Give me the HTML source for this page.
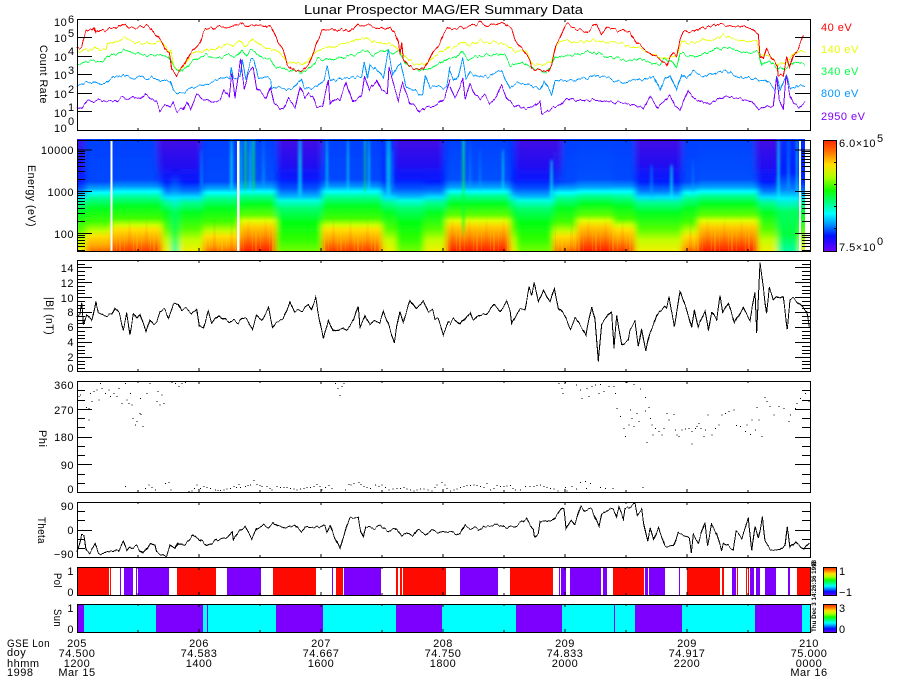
<!DOCTYPE html>
<html lang="en">
<head>
<meta charset="utf-8">
<title>Lunar Prospector MAG/ER Summary Data</title>
<style>
html,body{margin:0;padding:0;background:#fff}
svg{display:block}
text{font-family:"Liberation Sans",sans-serif;font-size:11px;letter-spacing:.5px;fill:#000}
.e{text-anchor:end}
.m{text-anchor:middle}
.l{fill:none;stroke-width:1;shape-rendering:crispEdges;vector-effect:non-scaling-stroke}
.a{fill:none;stroke:#000;stroke-width:1;shape-rendering:crispEdges}
.c{shape-rendering:crispEdges}
</style>
</head>
<body>
<svg xmlns="http://www.w3.org/2000/svg" width="900" height="700" viewBox="0 0 900 700">
<defs>
<linearGradient id="H" x1="0" y1="0" x2="0" y2="1"><stop offset="0" stop-color="#0040ff"/><stop offset=".36" stop-color="#0048ff"/><stop offset=".42" stop-color="#0090ff"/><stop offset=".47" stop-color="#00ffff"/><stop offset=".52" stop-color="#00ff90"/><stop offset=".6" stop-color="#00ff20"/><stop offset=".71" stop-color="#40ff00"/><stop offset=".77" stop-color="#d0ff00"/><stop offset=".81" stop-color="#ffe000"/><stop offset=".9" stop-color="#ffa000"/><stop offset="1" stop-color="#ff4000"/></linearGradient>
<linearGradient id="S" x1="0" y1="0" x2="0" y2="1"><stop offset="0" stop-color="#0040ff"/><stop offset=".36" stop-color="#0050ff"/><stop offset=".43" stop-color="#00a0ff"/><stop offset=".47" stop-color="#00ffff"/><stop offset=".51" stop-color="#00ff90"/><stop offset=".58" stop-color="#00ff20"/><stop offset=".68" stop-color="#60ff00"/><stop offset=".73" stop-color="#e0ff00"/><stop offset=".78" stop-color="#ffd000"/><stop offset=".87" stop-color="#ff9000"/><stop offset="1" stop-color="#ff2000"/></linearGradient>
<linearGradient id="M" x1="0" y1="0" x2="0" y2="1"><stop offset="0" stop-color="#0040ff"/><stop offset=".38" stop-color="#0048ff"/><stop offset=".44" stop-color="#00a0ff"/><stop offset=".48" stop-color="#00ffff"/><stop offset=".53" stop-color="#00ff90"/><stop offset=".62" stop-color="#00ff20"/><stop offset=".74" stop-color="#40ff00"/><stop offset=".82" stop-color="#c0ff00"/><stop offset=".87" stop-color="#ffe000"/><stop offset=".95" stop-color="#ffa800"/><stop offset="1" stop-color="#ff7000"/></linearGradient>
<linearGradient id="W" x1="0" y1="0" x2="0" y2="1"><stop offset="0" stop-color="#0030ff"/><stop offset=".35" stop-color="#0020ff"/><stop offset=".44" stop-color="#0050ff"/><stop offset=".51" stop-color="#00b0ff"/><stop offset=".55" stop-color="#00ffe0"/><stop offset=".62" stop-color="#00ff70"/><stop offset=".75" stop-color="#00ff10"/><stop offset=".9" stop-color="#30ff00"/><stop offset="1" stop-color="#70ff00"/></linearGradient>
<linearGradient id="Y" x1="0" y1="0" x2="0" y2="1"><stop offset="0" stop-color="#0030ff"/><stop offset=".38" stop-color="#0020ff"/><stop offset=".46" stop-color="#0070ff"/><stop offset=".52" stop-color="#00e0ff"/><stop offset=".57" stop-color="#00ff90"/><stop offset=".66" stop-color="#00ff20"/><stop offset=".8" stop-color="#50ff00"/><stop offset=".9" stop-color="#c0ff00"/><stop offset="1" stop-color="#f0f000"/></linearGradient>
<linearGradient id="T" x1="0" y1="0" x2="0" y2="1"><stop offset="0" stop-color="#0030ff"/><stop offset=".3" stop-color="#0020ff"/><stop offset=".45" stop-color="#0080ff"/><stop offset=".53" stop-color="#00f0ff"/><stop offset=".65" stop-color="#00ff60"/><stop offset=".85" stop-color="#00ff40"/><stop offset="1" stop-color="#00ffa0"/></linearGradient>
<linearGradient id="P" x1="0" y1="0" x2="0" y2="1"><stop offset="0" stop-color="#5000e0" stop-opacity=".85"/><stop offset=".55" stop-color="#3800e8" stop-opacity=".6"/><stop offset="1" stop-color="#1000ff" stop-opacity="0"/></linearGradient>
<linearGradient id="C" x1="0" y1="0" x2="0" y2="1"><stop offset="0" stop-color="#00c0ff"/><stop offset=".35" stop-color="#00ffe0"/><stop offset=".85" stop-color="#00f8ff"/><stop offset="1" stop-color="#00f0ff" stop-opacity="0"/></linearGradient>
<linearGradient id="G" x1="0" y1="0" x2="0" y2="1"><stop offset="0" stop-color="#00ffa0"/><stop offset=".3" stop-color="#00ff50"/><stop offset=".85" stop-color="#00ff30"/><stop offset="1" stop-color="#00ff30" stop-opacity="0"/></linearGradient>
<linearGradient id="L" x1="0" y1="0" x2="0" y2="1"><stop offset="0" stop-color="#0060ff"/><stop offset=".8" stop-color="#00a8ff"/><stop offset="1" stop-color="#00d0ff" stop-opacity="0"/></linearGradient>
<linearGradient id="R" x1="0" y1="0" x2="0" y2="1"><stop offset="0" stop-color="#ff2800"/><stop offset=".1" stop-color="#ff7000"/><stop offset=".22" stop-color="#ffe000"/><stop offset=".33" stop-color="#b0ff00"/><stop offset=".45" stop-color="#10ff00"/><stop offset=".56" stop-color="#00ff80"/><stop offset=".66" stop-color="#00ffff"/><stop offset=".76" stop-color="#0090ff"/><stop offset=".86" stop-color="#0010ff"/><stop offset="1" stop-color="#7000ff"/></linearGradient>
<linearGradient id="fdg" x1="0" y1="0" x2="0" y2="1"><stop offset="0" stop-color="#000"/><stop offset=".6" stop-color="#aaa"/><stop offset="1" stop-color="#fff"/></linearGradient>
<mask id="fd" maskUnits="userSpaceOnUse" x="77" y="215" width="733" height="37"><rect x="77" y="215" width="733" height="37" fill="url(#fdg)"/></mask>
<pattern id="st" patternUnits="userSpaceOnUse" width="17" height="40"><rect x="0" width="2" height="40" fill="#ffe000" opacity=".3"/><rect x="5" width="1" height="40" fill="#ffe000" opacity=".2"/><rect x="9" width="3" height="40" fill="#ff2000" opacity=".15"/><rect x="14" width="1" height="40" fill="#ffe000" opacity=".25"/></pattern>
<filter id="bl" filterUnits="userSpaceOnUse" x="30" y="130" width="830" height="130"><feGaussianBlur stdDeviation="3 0"/></filter>
<filter id="bs" filterUnits="userSpaceOnUse" x="30" y="130" width="830" height="130"><feGaussianBlur stdDeviation="1 1.5"/></filter>
<filter id="jag" filterUnits="userSpaceOnUse" x="70" y="12" width="750" height="126" color-interpolation-filters="sRGB"><feTurbulence type="fractalNoise" baseFrequency=".24 .03" numOctaves="2" seed="7" result="n"/><feColorMatrix in="n" type="matrix" values="0 0 0 0 .5 0 1 0 0 0 0 0 0 0 0 0 0 0 0 1" result="m"/><feDisplacementMap in="SourceGraphic" in2="m" scale="7" xChannelSelector="R" yChannelSelector="G"/></filter>
<filter id="jb" filterUnits="userSpaceOnUse" x="70" y="255" width="750" height="120" color-interpolation-filters="sRGB"><feTurbulence type="fractalNoise" baseFrequency=".22 .03" numOctaves="2" seed="3" result="n"/><feColorMatrix in="n" type="matrix" values="0 0 0 0 .5 0 1 0 0 0 0 0 0 0 0 0 0 0 0 1" result="m"/><feDisplacementMap in="SourceGraphic" in2="m" scale="6" xChannelSelector="R" yChannelSelector="G"/></filter>
<filter id="jt" filterUnits="userSpaceOnUse" x="70" y="498" width="750" height="64" color-interpolation-filters="sRGB"><feTurbulence type="fractalNoise" baseFrequency=".22 .03" numOctaves="2" seed="11" result="n"/><feColorMatrix in="n" type="matrix" values="0 0 0 0 .5 0 1 0 0 0 0 0 0 0 0 0 0 0 0 1" result="m"/><feDisplacementMap in="SourceGraphic" in2="m" scale="6" xChannelSelector="R" yChannelSelector="G"/></filter>
<clipPath id="sp"><rect x="77" y="139" width="728" height="112"/></clipPath>
<path id="xtt" class="a" d="M199 0v3M321 0v3M443 0v3M565 0v3M687 0v3M138 0v2M260 0v2M382 0v2M504 0v2M626 0v2M748 0v2"/>
<path id="xtb" class="a" d="M199 0v-3M321 0v-3M443 0v-3M565 0v-3M687 0v-3M138 0v-2M260 0v-2M382 0v-2M504 0v-2M626 0v-2M748 0v-2"/>
</defs>

<rect width="900" height="700" fill="#fff"/>
<text x="304" y="14" style="font-size:13px;letter-spacing:0" textLength="279" lengthAdjust="spacingAndGlyphs">Lunar Prospector MAG/ER Summary Data</text>

<!-- PANEL 1 -->
<g filter="url(#jag)">
<g transform="translate(0,0) scale(.33333)" fill="none" stroke-width="3">
<polyline class="l" stroke="#e6ff00" points="230,150 245,155 260,145 275,150 285,140 300,152 318,148 322,128 340,125 355,125 372,112 385,120 400,125 420,128 440,125 458,132 470,122 490,130 505,152 512,150 520,195 535,212 550,200 570,170 590,155 605,158 620,150 640,145 660,140 680,132 700,135 722,122 735,140 760,118 775,130 800,142 825,150 840,160 860,185 880,190 910,192 930,178 945,158 965,150 985,145 1010,140 1030,130 1050,125 1075,118 1100,112 1125,125 1150,130 1170,128 1190,142 1200,155 1215,170 1240,190 1275,195 1300,170 1320,155 1335,150 1350,135"/>
<polyline class="l" stroke="#00ff40" points="230,195 250,188 270,180 290,183 310,185 322,170 335,160 352,162 370,152 390,158 420,160 440,165 470,165 490,168 505,168 520,200 540,215 555,205 570,190 590,178 620,165 640,172 660,170 690,165 715,170 725,150 738,168 750,152 765,155 785,172 810,175 825,200 850,205 870,210 900,217 920,208 940,195 955,175 975,182 1000,178 1040,170 1070,160 1100,150 1120,165 1160,148 1180,160 1197,150 1215,190 1240,205 1260,212 1290,205 1320,190 1350,170"/>
<polyline class="l" stroke="#0096ff" points="230,258 245,252 270,248 295,252 320,248 340,230 355,232 372,224 395,232 420,232 440,236 455,232 480,240 510,240 520,270 540,282 565,270 590,258 620,250 640,245 665,232 690,232 693,200 700,238 720,232 727,180 738,235 752,182 762,180 775,235 800,232 812,235 815,262 840,258 860,268 880,262 905,235 912,262 935,265 950,258 972,240 982,200 990,240 1010,236 1040,235 1060,232 1085,232 1093,185 1103,240 1110,195 1125,205 1150,230 1165,150 1178,225 1192,200 1202,190 1218,260 1240,270 1268,288 1276,225 1290,262 1320,262 1340,262 1350,200"/>
<polyline class="l" stroke="#7d00ff" points="230,320 245,325 262,302 280,305 300,298 320,305 345,305 365,292 385,298 400,288 420,298 435,282 450,295 470,305 480,328 495,315 512,325 520,308 532,332 548,330 560,305 572,325 590,282 610,300 625,300 640,310 660,300 672,272 688,290 695,220 705,295 722,180 733,265 745,220 760,205 770,265 785,280 800,295 812,262 822,310 840,322 850,328 865,295 885,325 900,258 915,292 925,280 938,290 950,320 968,318 985,240 990,310 1005,295 1020,300 1038,250 1058,305 1085,285 1094,230 1108,272 1130,240 1145,270 1162,280 1167,205 1195,300 1208,250 1230,310 1248,320 1260,338 1280,320 1310,315 1335,292 1350,240"/>
<polyline class="l" stroke="#ff0000" points="230,142 245,142 250,120 258,95 265,90 275,88 282,78 288,100 300,92 315,90 330,85 345,85 360,80 375,72 385,82 395,80 410,85 425,80 440,80 455,90 470,105 485,125 495,148 508,155 515,210 525,222 530,228 540,210 555,190 570,160 585,145 600,130 610,95 620,88 640,85 660,80 680,82 700,78 722,70 735,78 750,75 770,75 790,80 815,82 825,105 835,130 850,150 858,180 862,195 875,205 890,215 905,210 925,195 935,175 950,130 965,95 970,88 1000,88 1010,95 1025,85 1045,95 1060,88 1075,72 1095,78 1115,75 1130,85 1150,88 1170,85 1185,100 1195,125 1200,160 1205,125 1210,180 1225,195 1240,205 1270,208 1285,185 1300,150 1320,130 1330,100 1345,85 1350,85"/>
</g>
<g transform="translate(450,0) scale(.33333)" fill="none" stroke-width="3">
<polyline class="l" stroke="#e6ff00" points="0,150 20,140 40,122 60,138 90,120 110,130 130,125 170,135 195,155 230,155 245,190 280,195 305,185 320,130 345,120 370,128 400,128 430,120 460,128 480,125 520,130 560,145 600,160 650,175 680,170 695,125 730,130 760,115 790,122 820,105 860,120 920,125 930,170 960,170 985,195 1015,185 1035,155 1065,153"/>
<polyline class="l" stroke="#00ff40" points="0,175 20,172 38,152 55,180 80,168 100,165 135,162 165,165 180,195 215,190 240,200 270,210 290,222 305,195 315,170 345,168 370,165 400,160 430,155 470,170 520,178 550,180 580,182 630,195 640,175 670,190 680,205 690,160 730,172 770,155 790,150 820,142 870,155 925,160 935,195 960,185 985,205 1010,205 1030,185 1065,193"/>
<polyline class="l" stroke="#0096ff" points="0,215 10,240 25,225 38,175 48,240 60,215 80,228 100,232 130,225 155,212 165,232 180,262 200,250 230,252 270,270 282,245 305,285 315,240 345,245 370,240 400,235 430,228 480,235 520,250 550,240 580,240 610,228 630,272 645,235 660,225 680,270 695,220 710,238 730,212 770,232 790,222 820,210 870,230 920,235 945,240 975,268 980,222 990,268 1008,225 1020,262 1040,260 1065,262"/>
<polyline class="l" stroke="#7d00ff" points="0,260 15,290 28,262 38,235 45,300 60,250 75,282 90,295 105,285 120,310 140,290 155,255 170,295 190,312 220,325 250,320 270,305 275,340 300,328 330,315 350,295 385,302 420,300 480,305 520,310 550,315 580,322 600,290 625,325 660,285 675,318 690,325 715,275 730,292 760,310 790,305 820,290 870,295 905,305 925,330 950,315 970,320 980,225 988,300 1000,330 1008,225 1020,285 1030,310 1045,322 1065,307"/>
<polyline class="l" stroke="#ff0000" points="0,85 30,85 60,80 90,68 110,78 130,72 160,72 185,85 195,120 210,140 230,165 240,180 245,205 270,210 295,218 305,195 318,130 330,115 345,78 350,75 380,85 410,97 430,80 440,72 455,105 470,80 500,90 540,95 560,130 590,155 610,165 625,170 650,195 660,175 670,160 680,170 690,120 700,95 730,95 760,85 790,75 820,72 860,80 905,85 925,105 930,170 940,180 950,150 965,175 982,195 985,225 1000,225 1010,170 1018,205 1030,165 1045,145 1060,105"/>
</g>
</g>
<rect class="a" x="77.5" y="19.5" width="733" height="111"/>
<use href="#xtt" y="19"/><use href="#xtb" y="130"/>
<path class="a" d="M77 37.5h15M77 56.5h15M77 74.5h15M77 93.5h15M77 111.5h15M810 37.5h-15M810 56.5h-15M810 74.5h-15M810 93.5h-15M810 111.5h-15"/>
<text x="54" y="26">10</text><text x="68" y="23">6</text>
<text x="54" y="42">10</text><text x="68" y="37">5</text>
<text x="54" y="61">10</text><text x="68" y="55">4</text>
<text x="54" y="79">10</text><text x="68" y="74">3</text>
<text x="54" y="98">10</text><text x="68" y="93">2</text>
<text x="54" y="117">10</text><text x="68" y="111">1</text>
<text x="54" y="132">10</text><text x="68" y="125">0</text>
<text transform="translate(40,45) rotate(90)" textLength="59" lengthAdjust="spacingAndGlyphs">Count Rate</text>
<text x="821" y="31" style="fill:#ff0000">40 eV</text>
<text x="821" y="53" style="fill:#e6ff00">140 eV</text>
<text x="821" y="75" style="fill:#00ff40">340 eV</text>
<text x="821" y="97" style="fill:#0096ff">800 eV</text>
<text x="821" y="120" style="fill:#7d00ff">2950 eV</text>

<!-- PANEL 2 -->
<g clip-path="url(#sp)">
<g filter="url(#bl)">
<rect x="40" y="139" width="46" height="112" fill="url(#Y)"/>
<rect x="86" y="139" width="26" height="112" fill="url(#M)"/>
<rect x="112" y="139" width="50" height="112" fill="url(#H)"/>
<rect x="162" y="139" width="9" height="112" fill="url(#Y)"/>
<rect x="171" y="139" width="8" height="112" fill="url(#T)"/>
<rect x="179" y="139" width="24" height="112" fill="url(#Y)"/>
<rect x="203" y="139" width="36" height="112" fill="url(#M)"/>
<rect x="239" y="139" width="37" height="112" fill="url(#S)"/>
<rect x="276" y="139" width="46" height="112" fill="url(#W)"/>
<rect x="322" y="139" width="60" height="112" fill="url(#H)"/>
<rect x="382" y="139" width="14" height="112" fill="url(#Y)"/>
<rect x="396" y="139" width="28" height="112" fill="url(#W)"/>
<rect x="424" y="139" width="22" height="112" fill="url(#Y)"/>
<rect x="446" y="139" width="64" height="112" fill="url(#S)"/>
<rect x="510" y="139" width="6" height="112" fill="url(#Y)"/>
<rect x="516" y="139" width="37" height="112" fill="url(#W)"/>
<rect x="553" y="139" width="24" height="112" fill="url(#M)"/>
<rect x="577" y="139" width="36" height="112" fill="url(#S)"/>
<rect x="613" y="139" width="22" height="112" fill="url(#H)"/>
<rect x="635" y="139" width="47" height="112" fill="url(#Y)"/>
<rect x="682" y="139" width="16" height="112" fill="url(#M)"/>
<rect x="698" y="139" width="60" height="112" fill="url(#S)"/>
<rect x="758" y="139" width="19" height="112" fill="url(#Y)"/>
<rect x="777" y="139" width="23" height="112" fill="url(#T)"/>
<rect x="800" y="139" width="40" height="112" fill="url(#Y)"/>
<rect x="77" y="139" width="6" height="52" fill="url(#P)"/>
<rect x="157" y="139" width="43" height="50" fill="url(#P)"/>
<rect x="278" y="139" width="44" height="48" fill="url(#P)"/>
<rect x="395" y="139" width="47" height="48" fill="url(#P)"/>
<rect x="516" y="139" width="46" height="50" fill="url(#P)"/>
<rect x="635" y="139" width="47" height="48" fill="url(#P)"/>
<rect x="755" y="139" width="24" height="50" fill="url(#P)"/>
</g>
<g filter="url(#bs)" opacity=".6">
<rect x="230" y="139" width="3" height="55" fill="url(#C)"/>
<rect x="240" y="139" width="2" height="55" fill="url(#C)"/>
<rect x="244" y="139" width="3" height="55" fill="url(#G)"/>
<rect x="249" y="139" width="2" height="55" fill="url(#C)"/>
<rect x="252" y="139" width="3" height="55" fill="url(#G)"/>
<rect x="200" y="150" width="3" height="40" fill="url(#L)"/>
<rect x="262" y="139" width="3" height="52" fill="url(#L)"/>
<rect x="298" y="139" width="4" height="62" fill="url(#C)"/>
<rect x="326" y="139" width="2" height="56" fill="url(#C)"/>
<rect x="347" y="139" width="2" height="56" fill="url(#C)"/>
<rect x="364" y="139" width="2" height="58" fill="url(#G)"/>
<rect x="368" y="139" width="2" height="58" fill="url(#C)"/>
<rect x="386" y="139" width="5" height="62" fill="url(#C)"/>
<rect x="392" y="150" width="2" height="44" fill="url(#L)"/>
<rect x="462" y="139" width="3" height="100" fill="url(#G)"/>
<rect x="469" y="139" width="2" height="56" fill="url(#L)"/>
<rect x="479" y="150" width="2" height="44" fill="url(#L)"/>
<rect x="502" y="150" width="2" height="44" fill="url(#C)"/>
<rect x="550" y="160" width="3" height="46" fill="url(#C)"/>
<rect x="650" y="165" width="3" height="36" fill="url(#L)"/>
<rect x="670" y="165" width="3" height="36" fill="url(#C)"/>
<rect x="692" y="160" width="2" height="36" fill="url(#L)"/>
<rect x="777" y="139" width="3" height="66" fill="url(#C)"/>
<rect x="787" y="139" width="3" height="56" fill="url(#L)"/>
<rect x="796" y="139" width="2" height="60" fill="url(#C)"/>
</g>
<g fill="url(#st)" mask="url(#fd)">
<rect x="112" y="215" width="48" height="37"/><rect x="205" y="215" width="32" height="37"/>
<rect x="241" y="215" width="35" height="37"/><rect x="324" y="215" width="56" height="37"/>
<rect x="446" y="215" width="62" height="37"/><rect x="555" y="215" width="78" height="37"/>
<rect x="684" y="215" width="72" height="37"/>
</g>
</g>
<rect class="c" x="110.5" y="140" width="2" height="111" fill="#fff"/>
<rect class="c" x="237" y="140" width="2.5" height="111" fill="#fff"/>
<rect class="c" x="799" y="140" width="2" height="111" fill="#fff"/>
<rect class="a" x="77.5" y="140.5" width="733" height="111"/>
<use href="#xtt" y="140"/><use href="#xtb" y="251"/>
<path class="a" d="M77 150h15M77 191.5h15M77 233.5h15M810 150h-15M810 191.5h-15M810 233.5h-15"/>
<path class="a" d="M77 151.5h8M77 153.5h8M77 156.5h8M77 159.5h8M77 162.5h8M77 166.5h8M77 171.5h8M77 179.5h8M77 193.5h8M77 195.5h8M77 198.5h8M77 201.5h8M77 204.5h8M77 208.5h8M77 213.5h8M77 221.5h8M77 235.5h8M77 237.5h8M77 240.5h8M77 243.5h8M77 246.5h8M77 250.5h8"/>
<path class="a" d="M810 151.5h-8M810 153.5h-8M810 156.5h-8M810 159.5h-8M810 162.5h-8M810 166.5h-8M810 171.5h-8M810 179.5h-8M810 193.5h-8M810 195.5h-8M810 198.5h-8M810 201.5h-8M810 204.5h-8M810 208.5h-8M810 213.5h-8M810 221.5h-8M810 235.5h-8M810 237.5h-8M810 240.5h-8M810 243.5h-8M810 246.5h-8M810 250.5h-8"/>
<text x="74" y="154" class="e">10000</text>
<text x="74" y="196" class="e">1000</text>
<text x="74" y="238" class="e">100</text>
<text transform="translate(28,165) rotate(90)" textLength="62" lengthAdjust="spacingAndGlyphs">Energy (eV)</text>
<rect x="823.5" y="140.5" width="13" height="111" fill="url(#R)" stroke="#000" class="c"/>
<path class="a" d="M837 162.5h-3M837 184.5h-3M837 206.5h-3M837 228.5h-3"/>
<text x="839" y="147">6.0×10</text><text x="877" y="142">5</text>
<text x="839" y="251">7.5×10</text><text x="877" y="245">0</text>

<!-- PANEL 3 -->
<g filter="url(#jb)">
<g transform="translate(0,255) scale(.33333)" fill="none" stroke="#000">
<polyline class="l" points="230,185 240,180 245,145 250,210 260,175 275,195 288,140 295,170 305,175 320,180 335,178 345,160 358,175 370,225 380,175 390,240 400,175 410,190 420,180 438,230 450,190 460,205 470,200 480,170 495,165 505,190 520,150 535,145 545,165 560,160 575,178 590,165 598,215 610,220 625,170 635,205 660,180 680,200 700,195 715,205 725,190 740,195 757,222 770,180 785,195 805,158 818,218 830,200 850,190 870,140 885,170 905,165 925,150 935,165 947,130 958,190 970,250 985,195 1000,230 1020,220 1040,225 1060,200 1075,155 1080,220 1095,180 1110,210 1125,195 1140,205 1150,170 1165,205 1183,268 1190,215 1200,170 1210,205 1230,135 1250,165 1270,137 1285,170 1298,165 1305,190 1315,190 1330,238 1345,200 1350,200"/>
</g>
<g transform="translate(450,255) scale(.33333)" fill="none" stroke="#000">
<polyline class="l" points="0,210 10,190 30,210 50,180 60,172 70,198 90,180 110,178 130,145 150,168 170,140 180,170 185,208 210,165 225,165 238,95 245,120 252,82 265,138 280,108 300,140 313,103 325,160 345,185 362,222 375,190 400,225 408,240 425,155 435,195 445,320 455,205 470,190 485,170 492,280 500,180 515,270 535,255 540,225 555,200 565,275 575,220 587,287 600,235 620,180 645,155 650,160 657,125 673,215 690,110 705,150 725,218 733,162 745,215 765,170 775,228 785,170 800,195 810,120 818,175 835,145 853,205 880,155 900,195 915,110 920,235 930,25 950,175 958,100 970,135 985,122 1000,130 1012,225 1020,135 1030,128 1050,150 1070,170 1078,215"/>
</g>
</g>
<rect class="a" x="77.5" y="260.5" width="733" height="111"/>
<use href="#xtt" y="260"/><use href="#xtb" y="371"/>
<path class="a" d="M77 267.5h15M77 282.5h15M77 297.5h15M77 312.5h15M77 327.5h15M77 342.5h15M77 357.5h15M810 267.5h-15M810 282.5h-15M810 297.5h-15M810 312.5h-15M810 327.5h-15M810 342.5h-15M810 357.5h-15"/>
<path class="a" d="M77 264.5h8M77 271.5h8M77 275.5h8M77 279.5h8M77 286.5h8M77 290.5h8M77 293.5h8M77 301.5h8M77 305.5h8M77 308.5h8M77 316.5h8M77 320.5h8M77 323.5h8M77 331.5h8M77 335.5h8M77 338.5h8M77 346.5h8M77 350.5h8M77 353.5h8M77 361.5h8M77 364.5h8M77 368.5h8"/>
<path class="a" d="M810 264.5h-8M810 271.5h-8M810 275.5h-8M810 279.5h-8M810 286.5h-8M810 290.5h-8M810 293.5h-8M810 301.5h-8M810 305.5h-8M810 308.5h-8M810 316.5h-8M810 320.5h-8M810 323.5h-8M810 331.5h-8M810 335.5h-8M810 338.5h-8M810 346.5h-8M810 350.5h-8M810 353.5h-8M810 361.5h-8M810 364.5h-8M810 368.5h-8"/>
<text x="74" y="272" class="e">14</text>
<text x="74" y="287" class="e">12</text>
<text x="74" y="302" class="e">10</text>
<text x="74" y="316" class="e">8</text>
<text x="74" y="331" class="e">6</text>
<text x="74" y="346" class="e">4</text>
<text x="74" y="361" class="e">2</text>
<text x="74" y="372" class="e">0</text>
<text transform="translate(46,297) rotate(90)" textLength="38" lengthAdjust="spacingAndGlyphs">|B| (nT)</text>

<!-- PANEL 4 -->
<path transform="translate(0,375) scale(.33333)" fill="none" stroke="#000" stroke-width="3" class="c" d="M235 20h3M245 20h3M235 65h3M240 60h3M258 98h3M265 100h3M265 135h3M270 55h3M275 80h3M280 50h3M290 45h3M295 75h3M300 25h3M305 40h3M315 55h3M325 45h3M330 65h3M340 55h3M350 65h3M355 40h3M365 85h3M375 25h3M380 75h3M385 85h3M390 55h3M395 90h3M398 130h3M405 150h3M410 140h3M418 115h3M422 118h3M427 155h3M420 70h3M440 55h3M448 25h3M472 50h3M470 80h3M478 90h3M485 60h3M490 85h3M515 22h3M525 25h3M535 35h3M545 25h3M555 22h3M570 20h3M1005 25h3M1012 40h3M1018 62h3M1025 35h3M1030 25h3M375 335h3M435 340h3M445 330h3M455 338h3M465 345h3M495 325h3M505 322h3M512 345h3M565 350h3M575 348h3M582 340h3M590 330h3M600 340h3M610 335h3M620 337h3M630 340h3M645 345h3M652 347h3M660 347h3M670 345h3M680 342h3M690 340h3M700 335h3M708 338h3M715 328h3M720 338h3M735 335h3M742 332h3M750 330h3M760 316h3M770 328h3M778 332h3M785 335h3M800 335h3M808 340h3M815 345h3M830 335h3M840 338h3M850 338h3M860 338h3M870 340h3M880 342h3M890 345h3M900 342h3M910 340h3M920 338h3M930 338h3M940 335h3M950 328h3M958 335h3M965 345h3M975 338h3M985 332h3M995 340h3M1035 345h3M1045 328h3M1052 330h3M1060 325h3M1075 322h3M1082 328h3M1090 335h3M1100 338h3M1110 340h3M1125 330h3M1135 335h3M1145 330h3M1155 338h3M1165 345h3M1178 342h3M1190 340h3M1200 340h3M1210 338h3M1220 342h3M1230 345h3M1240 348h3M1250 345h3M1260 342h3M1270 342h3M1282 345h3M1295 348h3M1303 338h3M1310 330h3M1325 322h3M1333 330h3M1340 340h3"/>
<path transform="translate(450,375) scale(.33333)" fill="none" stroke="#000" stroke-width="3" class="c" d="M325 25h3M335 40h3M345 22h3M338 55h3M378 30h3M390 45h3M395 70h3M410 40h3M415 65h3M425 35h3M435 30h3M445 55h3M450 28h3M460 50h3M475 35h3M490 35h3M495 55h3M530 22h3M550 28h3M570 42h3M585 68h3M500 100h3M510 125h3M520 160h3M525 185h3M540 105h3M545 130h3M535 150h3M550 155h3M560 115h3M565 140h3M585 108h3M595 98h3M600 130h3M605 150h3M590 203h3M608 180h3M615 160h3M625 170h3M635 180h3M640 160h3M650 115h3M655 135h3M670 118h3M675 165h3M680 180h3M685 185h3M695 165h3M705 162h3M715 160h3M725 170h3M725 207h3M735 160h3M740 155h3M745 145h3M752 160h3M760 185h3M765 165h3M772 120h3M785 180h3M795 160h3M805 150h3M815 120h3M825 115h3M835 110h3M850 105h3M858 152h3M870 155h3M885 170h3M890 150h3M900 178h3M905 135h3M915 165h3M920 98h3M925 135h3M935 185h3M943 68h3M950 80h3M958 95h3M970 120h3M985 95h3M1000 100h3M1015 140h3M1020 120h3M1035 100h3M1040 85h3M1050 70h3M1065 55h3M1075 80h3M0 348h3M10 345h3M20 342h3M30 338h3M40 335h3M50 332h3M60 332h3M70 330h3M80 332h3M90 335h3M100 338h3M110 325h3M120 345h3M130 340h3M140 332h3M150 335h3M160 335h3M170 333h3M180 332h3M188 340h3M195 345h3M210 345h3M225 335h3M238 335h3M250 335h3M260 332h3M270 330h3M280 335h3M290 338h3M300 340h3M310 342h3M322 348h3M345 338h3M350 348h3M365 335h3M378 342h3M390 322h3M405 320h3M420 325h3M408 340h3M450 338h3M465 340h3M488 340h3M577 338h3"/>
<rect class="a" x="77.5" y="381.5" width="733" height="111"/>
<use href="#xtt" y="381"/><use href="#xtb" y="492"/>
<path class="a" d="M77 409.5h15M77 437.5h15M77 464.5h15M810 409.5h-15M810 437.5h-15M810 464.5h-15"/>
<path class="a" d="M77 390.5h8M77 400.5h8M77 418.5h8M77 427.5h8M77 446.5h8M77 455.5h8M77 474.5h8M77 483.5h8M810 390.5h-8M810 400.5h-8M810 418.5h-8M810 427.5h-8M810 446.5h-8M810 455.5h-8M810 474.5h-8M810 483.5h-8"/>
<text x="74" y="389" class="e">360</text>
<text x="74" y="414" class="e">270</text>
<text x="74" y="441" class="e">180</text>
<text x="74" y="469" class="e">90</text>
<text x="74" y="493" class="e">0</text>
<text transform="translate(39,430) rotate(90)">Phi</text>

<!-- PANEL 5 -->
<g filter="url(#jt)">
<g transform="translate(0,375) scale(.33333)" fill="none" stroke="#000">
<polyline class="l" points="230,530 240,500 245,478 252,480 258,525 270,535 285,508 295,535 320,528 355,525 370,500 380,530 390,515 400,520 410,512 428,538 450,503 465,515 470,535 500,545 510,510 525,520 535,500 555,510 580,480 595,490 620,510 650,495 680,490 697,470 700,492 720,465 735,455 755,490 770,460 790,450 805,458 820,442 835,455 860,458 885,450 905,470 915,458 945,455 975,455 980,472 990,450 1005,490 1020,522 1030,490 1040,450 1050,430 1075,425 1082,465 1090,485 1097,455 1120,460 1140,455 1170,468 1190,462 1205,482 1220,472 1238,485 1250,465 1280,478 1295,465 1315,472 1350,470"/>
</g>
<g transform="translate(450,375) scale(.33333)" fill="none" stroke="#000">
<polyline class="l" points="0,470 30,478 45,452 60,460 95,462 100,455 140,450 170,458 200,450 230,432 250,465 253,490 265,475 270,440 310,437 335,400 342,405 348,462 365,435 375,445 393,392 405,405 425,400 435,425 447,455 455,415 490,403 500,425 507,395 520,430 525,398 535,400 555,385 562,418 575,405 582,450 593,500 600,460 610,495 625,458 645,512 670,512 685,472 718,490 724,538 730,480 745,505 765,440 773,512 785,450 800,475 815,528 820,505 850,523 858,470 875,488 895,432 905,528 915,455 925,490 937,428 945,500 960,525 990,525 1005,510 1012,453 1020,515 1035,500 1060,522 1078,505"/>
</g>
</g>
<rect class="a" x="77.5" y="502.5" width="733" height="55"/>
<use href="#xtt" y="502"/><use href="#xtb" y="557"/>
<path class="a" d="M77 530.5h15M810 530.5h-15M77 511.5h8M77 520.5h8M77 539.5h8M77 548.5h8M810 511.5h-8M810 520.5h-8M810 539.5h-8M810 548.5h-8"/>
<text x="74" y="510" class="e">90</text>
<text x="74" y="534" class="e">0</text>
<text x="74" y="558" class="e">−90</text>
<text transform="translate(38,517) rotate(90)" textLength="27" lengthAdjust="spacingAndGlyphs">Theta</text>

<!-- POL -->
<g class="c" fill="#ff0a00">
<rect x="77" y="567" width="32" height="28"/><rect x="110" y="567" width="1" height="28"/>
<rect x="177" y="567" width="39" height="28"/><rect x="273" y="567" width="43" height="28"/>
<rect x="336" y="567" width="7" height="28"/><rect x="396" y="567" width="2" height="28"/>
<rect x="400" y="567" width="2" height="28"/><rect x="403" y="567" width="43" height="28"/>
<rect x="510" y="567" width="43" height="28"/><rect x="613" y="567" width="31" height="28"/>
<rect x="687" y="567" width="33" height="28"/><rect x="722" y="567" width="2" height="28"/>
<rect x="737" y="567" width="1" height="28"/><rect x="746" y="567" width="1" height="28"/>
<rect x="748" y="567" width="1" height="28"/><rect x="797" y="567" width="13" height="28"/>
</g>
<g class="c" fill="#7d00ff">
<rect x="120" y="567" width="1" height="28"/><rect x="124" y="567" width="9" height="28"/>
<rect x="136" y="567" width="1" height="28"/><rect x="138" y="567" width="31" height="28"/>
<rect x="227" y="567" width="34" height="28"/><rect x="332" y="567" width="1" height="28"/>
<rect x="344" y="567" width="37" height="28"/><rect x="460" y="567" width="38" height="28"/>
<rect x="559" y="567" width="1" height="28"/><rect x="561" y="567" width="5" height="28"/>
<rect x="570" y="567" width="31" height="28"/><rect x="603" y="567" width="4" height="28"/>
<rect x="645" y="567" width="3" height="28"/><rect x="649" y="567" width="16" height="28"/>
<rect x="679" y="567" width="1" height="28"/><rect x="732" y="567" width="4" height="28"/>
<rect x="750" y="567" width="4" height="28"/><rect x="756" y="567" width="4" height="28"/>
<rect x="765" y="567" width="11" height="28"/><rect x="788" y="567" width="2" height="28"/>
</g>
<rect class="a" x="77.5" y="567.5" width="733" height="28"/>
<use href="#xtt" y="567"/><use href="#xtb" y="595"/>
<text x="74" y="575" class="e">1</text>
<text x="74" y="596" class="e">0</text>
<text transform="translate(54,573) rotate(90)" textLength="15" lengthAdjust="spacingAndGlyphs">Pol</text>
<rect x="823.5" y="567.5" width="13" height="28" fill="url(#R)" stroke="#000" class="c"/>
<text x="839" y="575">1</text>
<text x="839" y="596">−1</text>

<!-- SUN -->
<rect class="c" x="77" y="604" width="733" height="28" fill="#00ffff"/>
<g class="c" fill="#7d00ff">
<rect x="77" y="604" width="7" height="28"/><rect x="156" y="604" width="47" height="28"/>
<rect x="207" y="604" width="1" height="28"/><rect x="276" y="604" width="47" height="28"/>
<rect x="396" y="604" width="46" height="28"/><rect x="516" y="604" width="46" height="28"/>
<rect x="614" y="604" width="1" height="28"/><rect x="635" y="604" width="47" height="28"/>
<rect x="755" y="604" width="47" height="28"/>
</g>
<rect class="a" x="77.5" y="604.5" width="733" height="28"/>
<use href="#xtt" y="604"/><use href="#xtb" y="632"/>
<text x="74" y="612" class="e">1</text>
<text x="74" y="633" class="e">0</text>
<text transform="translate(54,609) rotate(90)" textLength="18" lengthAdjust="spacingAndGlyphs">Sun</text>
<rect x="823.5" y="604.5" width="13" height="28" fill="url(#R)" stroke="#000" class="c"/>
<text x="839" y="612">3</text>
<text x="839" y="633">0</text>

<!-- DATE STAMP -->
<text transform="translate(816,632) rotate(-90)" style="font-size:6px;letter-spacing:0;font-weight:bold" textLength="72" lengthAdjust="spacingAndGlyphs">Thu Dec 3 14:26:36 1998</text>
<text x="811" y="566" style="font-size:5px;letter-spacing:0;font-weight:bold">92</text>

<!-- X AXIS LABELS -->
<text x="7" y="647" textLength="43" lengthAdjust="spacingAndGlyphs">GSE Lon</text>
<text x="7" y="656">doy</text>
<text x="7" y="667">hhmm</text>
<text x="7" y="676">1998</text>
<g class="m">
<text class="m" x="77" y="647">205</text><text class="m" x="77" y="657">74.500</text><text class="m" x="77" y="667">1200</text><text class="m" x="77" y="676">Mar 15</text>
<text class="m" x="199" y="647">206</text><text class="m" x="199" y="657">74.583</text><text class="m" x="199" y="667">1400</text>
<text class="m" x="321" y="647">207</text><text class="m" x="321" y="657">74.667</text><text class="m" x="321" y="667">1600</text>
<text class="m" x="443" y="647">208</text><text class="m" x="443" y="657">74.750</text><text class="m" x="443" y="667">1800</text>
<text class="m" x="565" y="647">209</text><text class="m" x="565" y="657">74.833</text><text class="m" x="565" y="667">2000</text>
<text class="m" x="687" y="647">209</text><text class="m" x="687" y="657">74.917</text><text class="m" x="687" y="667">2200</text>
<text class="m" x="809" y="647">210</text><text class="m" x="809" y="657">75.000</text><text class="m" x="809" y="667">0000</text><text class="m" x="809" y="676">Mar 16</text>
</g>
</svg>
</body>
</html>
